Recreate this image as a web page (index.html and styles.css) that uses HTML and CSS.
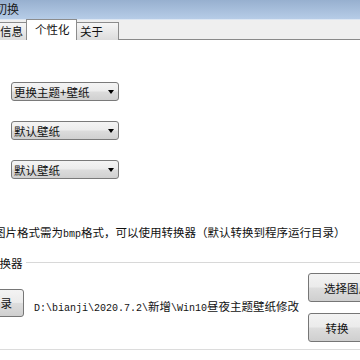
FILE: index.html
```html
<!DOCTYPE html>
<html lang="zh">
<head>
<meta charset="utf-8">
<link rel="stylesheet" href="styles.css">
</head>
<body>
<div class="window">
  <div class="titlebar"><span class="title">主题切换</span></div>
  <div class="tabs">
    <div class="tab tab-first">信息</div>
    <div class="tab tab-active">个性化</div>
    <div class="tab tab-last">关于</div>
  </div>
  <div class="panel">
    <div class="select"><span class="select-text">更换主题+壁纸</span><span class="arrow"></span></div>
    <div class="select"><span class="select-text">默认壁纸</span><span class="arrow"></span></div>
    <div class="select"><span class="select-text">默认壁纸</span><span class="arrow"></span></div>
    <p class="note">图片格式需为<span class="half">bmp</span>格式，可以使用转换器（默认转换到程序运行目录）</p>
    <div class="group">
      <div class="group-head"><span class="group-title">转换器</span><span class="group-line"></span></div>
      <div class="group-body">
        <button class="btn btn-open">打开目录</button>
        <div class="path"><span class="half">D:\bianji\2020.7.2\</span>新增<span class="half">\Win10</span>昼夜主题壁纸修改</div>
        <div class="btn-col">
          <button class="btn btn-pick">选择图片</button>
          <button class="btn btn-convert">转换</button>
        </div>
      </div>
    </div>
  </div>
</div>
</body>
</html>
```

FILE: styles.css
```css
html, body {
  margin: 0;
  padding: 0;
  background: #ffffff;
  width: 360px;
  height: 360px;
  overflow: hidden;
}
body {
  font-family: "Noto Sans CJK SC", "DejaVu Sans", sans-serif;
  font-size: 11.5px;
  color: #111;
}
.window {
  width: 386px;
}
.titlebar {
  height: 19px;
  background: linear-gradient(#97b0cf, #b6cce7);
  border-bottom: 1px solid #dce6f2;
  display: flex;
  align-items: center;
  overflow: hidden;
}
.title {
  margin-left: -29px;
  font-size: 12px;
  line-height: 14px;
  color: #1a1a1a;
  margin-top: -1px;
}
.tabs {
  height: 19px;
  background: #efefef;
  border-bottom: 1px solid #898989;
  display: flex;
  align-items: flex-end;
}
.tab {
  box-sizing: border-box;
  height: 18px;
  margin-bottom: -1px;
  border: 1px solid #8c8c8c;
  border-bottom: none;
  background: linear-gradient(#f6f6f6, #dcdcdc);
  font-size: 11.5px;
  line-height: 16px;
  color: #111;
}
.tab-first {
  width: 30px;
  margin-left: -4px;
  padding-left: 3px;
  border-right: none;
}
.tab-active {
  width: 51px;
  height: 21px;
  background: #ffffff;
  padding-left: 8px;
  line-height: 19px;
  position: relative;
}
.tab-last {
  width: 42px;
  padding-left: 3px;
  border-left: none;
}
.panel {
  padding-top: 42px;
  display: flex;
  flex-direction: column;
  align-items: flex-start;
}
.select {
  box-sizing: border-box;
  width: 108px;
  height: 19px;
  margin-left: 11px;
  margin-bottom: 20px;
  border: 1px solid #7a7a7a;
  border-radius: 3px;
  background: linear-gradient(#f4f4f4 0%, #ececec 48%, #dcdcdc 52%, #d0d0d0 100%);
  display: flex;
  align-items: center;
  justify-content: space-between;
  padding: 0 4px 0 2px;
}
.select-text {
  line-height: 16px;
  font-size: 11.5px;
}
.arrow {
  width: 0;
  height: 0;
  border-left: 3.5px solid transparent;
  border-right: 3.5px solid transparent;
  border-top: 4px solid #000;
  margin-top: 1px;
}
.note {
  margin: 26px 0 0 -6px;
  line-height: 14px;
  font-size: 11.5px;
  white-space: nowrap;
}
.half {
  font-family: "Liberation Mono", "DejaVu Sans Mono", monospace;
  font-size: 10px;
}
.group {
  width: 100%;
  margin-top: 14px;
  border-bottom: 1px solid #dcdcdc;
}
.group-head {
  display: flex;
  align-items: center;
  height: 14px;
}
.group-title {
  margin-left: -12px;
  line-height: 14px;
  font-size: 11.5px;
  white-space: nowrap;
}
.group-line {
  flex: 1;
  height: 0;
  margin-left: 3px;
  border-top: 1px solid #d8d8d8;
  border-bottom: 1px solid #ffffff;
}
.group-body {
  display: flex;
  align-items: flex-start;
  padding: 3px 0 7px 0;
}
.btn {
  box-sizing: border-box;
  border: 1px solid #767676;
  border-radius: 3px;
  background: linear-gradient(#f3f3f3 0%, #ebebeb 48%, #dddddd 52%, #cfcfcf 100%);
  font-family: "Noto Sans CJK SC", sans-serif;
  font-size: 11.5px;
  color: #111;
  padding: 0;
  line-height: 14px;
}
.btn-open {
  width: 70px;
  height: 28px;
  margin-left: -46px;
  margin-top: 16px;
}
.path {
  flex: 1;
  margin-left: 10px;
  margin-top: 26px;
  line-height: 14px;
  font-size: 11.5px;
  white-space: nowrap;
}
.btn-col {
  display: flex;
  flex-direction: column;
  gap: 11px;
}
.btn-pick {
  width: 78px;
  height: 29px;
}
.btn-convert {
  width: 58px;
  height: 29px;
}
```
